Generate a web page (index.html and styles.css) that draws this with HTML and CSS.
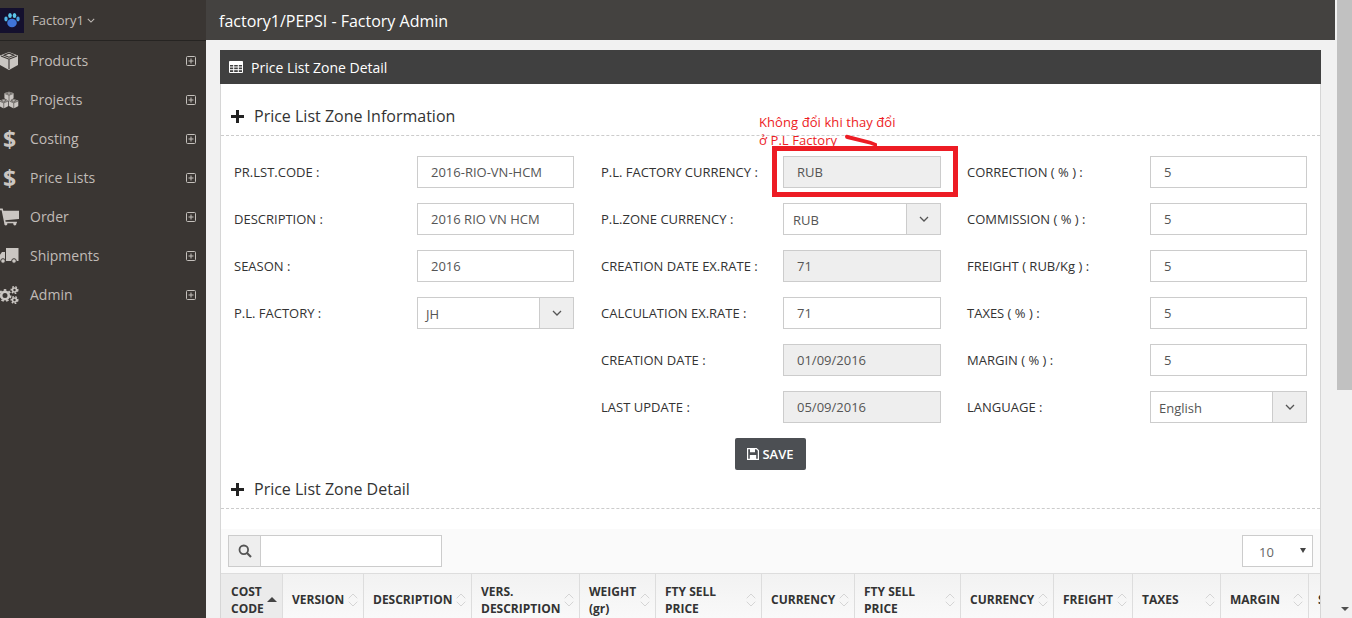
FILE: index.html
```html
<!DOCTYPE html>
<html lang="vi">
<head>
<meta charset="utf-8">
<title>Factory Admin</title>
<link rel="stylesheet" href="styles.css">
</head>
<body>
<svg class="defs" width="0" height="0" aria-hidden="true">
  <symbol id="cube" viewBox="0 0 18 18">
    <path d="M9 0l9 3.4V13l-9 5-9-5V3.4z" fill="#cac6c2"/>
    <path d="M1 4l8 3.2L17 4M9 7.2V17M4 3.2L9 1.2l5 2-5 2z" fill="none" stroke="#3a3633" stroke-width="1.1"/>
  </symbol>
  <symbol id="sort" viewBox="0 0 14 18">
    <path d="M2 7l5-5 5 5M2 11l5 5 5-5" fill="none" stroke="#cfcfcf" stroke-width="1"/>
  </symbol>
  <symbol id="plus-box" viewBox="0 0 10 10">
    <rect x=".5" y=".5" width="9" height="9" rx="1" fill="none" stroke="#c4c0bc"/>
    <path d="M2.5 5h5M5 2.5v5" stroke="#c4c0bc"/>
  </symbol>
  <symbol id="plus" viewBox="0 0 13 13">
    <path d="M5 0h3v5h5v3H8v5H5V8H0V5h5z" fill="#222"/>
  </symbol>
  <symbol id="chev" viewBox="0 0 10 6">
    <path d="M1 1l4 4 4-4" fill="none" stroke="currentColor" stroke-width="1.3"/>
  </symbol>
</svg>

<aside class="sidebar">
  <header class="brand">
    <svg class="logo" viewBox="0 0 24 25">
      <rect width="24" height="25" fill="#14102e"/>
      <ellipse cx="12" cy="15" rx="4.800" ry="4.200" fill="#3f74d8"/>
      <ellipse cx="6" cy="11" rx="1.700" ry="2.400" fill="#4fb6e6"/>
      <ellipse cx="10" cy="7.500" rx="1.800" ry="2.600" fill="#5cc6ea"/>
      <ellipse cx="14.500" cy="7.500" rx="1.800" ry="2.600" fill="#5cc6ea"/>
      <ellipse cx="18" cy="11" rx="1.700" ry="2.400" fill="#4a9fe2"/>
    </svg>
    <span class="brand-name">Factory1</span>
    <svg class="brand-chev"><use href="#chev"/></svg>
  </header>
  <nav class="menu">
    <a class="menu-item">
      <span class="menu-icon"><svg class="ic" viewBox="0 0 18 18"><use href="#cube"/></svg></span>
      <span class="menu-label">Products</span>
      <svg class="menu-plus"><use href="#plus-box"/></svg>
    </a>
    <a class="menu-item">
      <span class="menu-icon"><svg class="ic" viewBox="0 0 21 18"><use href="#cube" x="5.500" y="0" width="10" height="10"/><use href="#cube" x="0" y="8" width="10" height="10"/><use href="#cube" x="10.500" y="8" width="10" height="10"/></svg></span>
      <span class="menu-label">Projects</span>
      <svg class="menu-plus"><use href="#plus-box"/></svg>
    </a>
    <a class="menu-item">
      <span class="menu-icon"><span class="dollar">$</span></span>
      <span class="menu-label">Costing</span>
      <svg class="menu-plus"><use href="#plus-box"/></svg>
    </a>
    <a class="menu-item">
      <span class="menu-icon"><span class="dollar">$</span></span>
      <span class="menu-label">Price Lists</span>
      <svg class="menu-plus"><use href="#plus-box"/></svg>
    </a>
    <a class="menu-item">
      <span class="menu-icon"><svg class="ic" viewBox="0 0 19 16"><path d="M0 0h3.500l.6 2H19v8L6 11.200l.3 1.300H17V14H5L2.500 1.500H0z" fill="#cac6c2"/><circle cx="6.500" cy="14.500" r="1.500" fill="#cac6c2"/><circle cx="15" cy="14.500" r="1.500" fill="#cac6c2"/></svg></span>
      <span class="menu-label">Order</span>
      <svg class="menu-plus"><use href="#plus-box"/></svg>
    </a>
    <a class="menu-item">
      <span class="menu-icon"><svg class="ic" viewBox="0 0 20 16"><path d="M7 0h12.500v13H7zM0 8l3-4h3v9H0z" fill="#cac6c2"/><circle cx="4" cy="13" r="2.300" fill="#cac6c2" stroke="#3a3633"/><circle cx="15" cy="13" r="2.300" fill="#cac6c2" stroke="#3a3633"/></svg></span>
      <span class="menu-label">Shipments</span>
      <svg class="menu-plus"><use href="#plus-box"/></svg>
    </a>
    <a class="menu-item">
      <span class="menu-icon"><svg class="ic" viewBox="0 0 20 18"><circle cx="6" cy="9.500" r="3.800" fill="none" stroke="#cac6c2" stroke-width="2.600"/><circle cx="6" cy="9.500" r="5.600" fill="none" stroke="#cac6c2" stroke-width="1.800" stroke-dasharray="2.500 2.400"/><circle cx="15.500" cy="4" r="2" fill="none" stroke="#cac6c2" stroke-width="1.600"/><circle cx="15.500" cy="4" r="3.300" fill="none" stroke="#cac6c2" stroke-width="1.400" stroke-dasharray="1.700 1.500"/><circle cx="15.500" cy="14" r="2" fill="none" stroke="#cac6c2" stroke-width="1.600"/><circle cx="15.500" cy="14" r="3.300" fill="none" stroke="#cac6c2" stroke-width="1.400" stroke-dasharray="1.700 1.500"/></svg></span>
      <span class="menu-label">Admin</span>
      <svg class="menu-plus"><use href="#plus-box"/></svg>
    </a>
  </nav>
</aside>

<main class="main">
  <header class="topbar">factory1/PEPSI - Factory Admin</header>
  <section class="panel">
    <header class="panel-head">
      <svg class="panel-icon" viewBox="0 0 14 12"><path d="M.5.500h13v11H.5zM.5 3.500h13M.5 6h13M.5 8.700h13M4.700 3.500v8M9.300 3.500v8" fill="none" stroke="#fff" stroke-width="1"/><rect x=".5" y=".5" width="13" height="3" fill="#fff"/></svg>
      <span>Price List Zone Detail</span>
    </header>

    <h2 class="section-head first"><svg class="section-plus"><use href="#plus"/></svg>Price List Zone Information</h2>

    <form class="form">
      <div class="form-col">
        <div class="field"><label>PR.LST.CODE :</label><div class="input">2016-RIO-VN-HCM</div></div>
        <div class="field"><label>DESCRIPTION :</label><div class="input">2016 RIO VN HCM</div></div>
        <div class="field"><label>SEASON :</label><div class="input">2016</div></div>
        <div class="field"><label>P.L. FACTORY :</label><div class="select"><span>JH</span><i class="select-btn"><svg class="select-chev"><use href="#chev"/></svg></i></div></div>
      </div>
      <div class="form-col mid">
        <div class="field"><label>P.L. FACTORY CURRENCY :</label><div class="input off">RUB</div></div>
        <div class="field"><label>P.L.ZONE CURRENCY :</label><div class="select wide"><span>RUB</span><i class="select-btn"><svg class="select-chev"><use href="#chev"/></svg></i></div></div>
        <div class="field"><label>CREATION DATE EX.RATE :</label><div class="input off">71</div></div>
        <div class="field"><label>CALCULATION EX.RATE :</label><div class="input">71</div></div>
        <div class="field"><label>CREATION DATE :</label><div class="input off">01/09/2016</div></div>
        <div class="field"><label>LAST UPDATE :</label><div class="input off">05/09/2016</div></div>
      </div>
      <div class="form-col">
        <div class="field"><label>CORRECTION ( % ) :</label><div class="input">5</div></div>
        <div class="field"><label>COMMISSION ( % ) :</label><div class="input">5</div></div>
        <div class="field"><label>FREIGHT ( RUB/Kg ) :</label><div class="input">5</div></div>
        <div class="field"><label>TAXES ( % ) :</label><div class="input">5</div></div>
        <div class="field"><label>MARGIN ( % ) :</label><div class="input">5</div></div>
        <div class="field"><label>LANGUAGE :</label><div class="select lang"><span>English</span><i class="select-btn"><svg class="select-chev"><use href="#chev"/></svg></i></div></div>
      </div>
    </form>

    <div class="actions">
      <button class="save" type="button">
        <svg class="save-icon" viewBox="0 0 12 12"><path d="M.6.600h8.800l2 2v8.800H.6z" fill="none" stroke="#fff" stroke-width="1.200"/><path d="M3 1h5v3.200H3zM2.800 7h6.400v4H2.800z" fill="#fff"/></svg>SAVE
      </button>
    </div>

    <h2 class="section-head"><svg class="section-plus"><use href="#plus"/></svg>Price List Zone Detail</h2>

    <div class="toolbar">
      <div class="search">
        <span class="search-btn"><svg class="search-icon" viewBox="0 0 14 14"><circle cx="5.800" cy="5.800" r="4.300" fill="none" stroke="#555" stroke-width="1.800"/><path d="M9 9l4 4" stroke="#555" stroke-width="2.200"/></svg></span>
        <span class="search-input"></span>
      </div>
      <div class="page-size"><span>10</span><i class="page-caret"></i></div>
    </div>

    <div class="table-wrap">
      <table class="grid">
        <thead>
          <tr>
            <th class="sorted">COST CODE<i class="sort-up"></i></th>
            <th>VERSION<svg class="sort"><use href="#sort"/></svg></th>
            <th>DESCRIPTION<svg class="sort"><use href="#sort"/></svg></th>
            <th>VERS. DESCRIPTION<svg class="sort"><use href="#sort"/></svg></th>
            <th>WEIGHT (gr)<svg class="sort"><use href="#sort"/></svg></th>
            <th>FTY SELL PRICE<svg class="sort"><use href="#sort"/></svg></th>
            <th>CURRENCY<svg class="sort"><use href="#sort"/></svg></th>
            <th>FTY SELL PRICE<svg class="sort"><use href="#sort"/></svg></th>
            <th>CURRENCY<svg class="sort"><use href="#sort"/></svg></th>
            <th>FREIGHT<svg class="sort"><use href="#sort"/></svg></th>
            <th>TAXES<svg class="sort"><use href="#sort"/></svg></th>
            <th>MARGIN<svg class="sort"><use href="#sort"/></svg></th>
            <th>SELL</th>
          </tr>
        </thead>
      </table>
    </div>
  </section>

  <div class="note">
    <p class="note-text">Không đổi khi thay đổi<br>ở P.L Factory</p>
    <svg class="note-stroke" viewBox="0 0 34 14"><path d="M1 2.500Q1 .5 3 .8L27 7l6 2.500V13l-3-1-4-1.500L3 5Q1 4.500 1 2.500z" fill="#ed1c24"/></svg>
    <div class="note-box"></div>
  </div>
</main>

<div class="scrollbar">
  <div class="scroll-thumb"></div>
  <i class="scroll-arrow"></i>
</div>
</body>
</html>
```
FILE: styles.css
```css
* { box-sizing: border-box; }
html, body { height: 100%; }
body {
  margin: 0;
  display: flex;
  height: 100vh;
  overflow: hidden;
  background: #f1f1f1;
  font-family: "Open Sans", "Noto Sans", sans-serif;
  font-size: 13px;
  color: #333;
}
.defs { position: absolute; }

/* sidebar */
.sidebar {
  flex: 0 0 206px;
  background: #3a3633;
  color: #c0bbb7;
}
.brand {
  height: 41px;
  padding-top: 8px;
  display: flex;
  align-items: flex-start;
  border-bottom: 1px solid #262422;
}
.logo { width: 24px; height: 25px; flex: none; }
.brand-name { margin-left: 8px; font-size: 13px; line-height: 24px; }
.brand-chev { width: 8px; height: 5px; margin: 10px 0 0 3px; color: #c0bbb7; }
.menu { display: flex; flex-direction: column; }
.menu-item {
  height: 39px;
  display: flex;
  align-items: center;
  font-size: 14px;
}
.menu-icon {
  flex: 0 0 30px;
  display: flex;
  justify-content: center;
  margin-left: -1px;
  margin-right: 1px;
}
.ic { width: 20px; height: 18px; margin-right: 10px; margin-left: -1px; flex: none; }
.dollar {
  font-size: 23px;
  font-weight: 700;
  line-height: 24px;
  color: #cac6c2;
  margin-right: 10px;
  margin-left: 1px;
}
.menu-label { flex: 1; }
.menu-plus { width: 10px; height: 10px; margin-right: 10px; }

/* main column */
.main {
  flex: 0 0 1131px;
  min-width: 0;
  position: relative;
}
.topbar {
  width: 1129px;
  height: 40px;
  padding-left: 13px;
  background: #444240;
  color: #fff;
  font-size: 16px;
  line-height: 42px;
}
.panel {
  margin: 10px 16px 0 14px;
  background: #fff;
  border-left: 1px solid #d6d6d6;
  border-right: 1px solid #d6d6d6;
}
.panel-head {
  height: 34px;
  margin: 0 -1px;
  padding-left: 9px;
  display: flex;
  align-items: center;
  background: #404040;
  color: #fff;
  font-size: 14px;
}
.panel-icon { width: 14px; height: 12px; margin-right: 8px; }
.section-head {
  margin: 0 0 20px;
  padding: 8px 0 8px 10px;
  display: flex;
  align-items: center;
  font-size: 16px;
  line-height: 22px;
  font-weight: 400;
  color: #333;
  border-bottom: 1px dashed #ccc;
}
.section-head.first { margin-top: 13px; }
.section-plus { width: 13px; height: 13px; margin-right: 10px; flex: none; }

/* form */
.form {
  display: flex;
  padding-left: 13px;
}
.form-col {
  flex: 0 0 340px;
  display: flex;
  flex-direction: column;
  gap: 15px;
}
.form-col.mid { margin: 0 26px 0 27px; }
.field {
  height: 32px;
  display: flex;
  align-items: center;
  justify-content: space-between;
}
.field label { color: #333; white-space: nowrap; }
.input, .select {
  width: 157px;
  height: 32px;
  border: 1px solid #ccc;
  background: #fff;
  color: #555;
  line-height: 30px;
  padding-left: 13px;
}
.mid .input { width: 158px; }
.input.off { background: #eee; }
.select {
  display: flex;
  padding-left: 8px;
  line-height: 33px;
}
.select span { flex: 1; }
.select.wide { width: 158px; padding-left: 9px; }
.select.lang { padding-left: 8px; }
.select-btn {
  flex: 0 0 34px;
  display: flex;
  align-items: center;
  justify-content: center;
  background: #eee;
  border-left: 1px solid #ccc;
}
.select-chev { width: 10px; height: 6px; color: #555; }

.actions {
  margin-top: 15px;
  display: flex;
  padding-left: 514px;
}
.save {
  width: 71px;
  height: 32px;
  padding: 0;
  display: flex;
  align-items: center;
  justify-content: center;
  gap: 3px;
  border: 0;
  border-radius: 2px;
  background: #4c4f53;
  color: #fff;
  font: 600 13px "Open Sans", sans-serif;
}
.save-icon { width: 12px; height: 12px; }

/* toolbar */
.toolbar {
  height: 45px;
  padding: 6px 7px;
  display: flex;
  justify-content: space-between;
  background: #fafafa;
  border-bottom: 1px solid #ddd;
}
.search { display: flex; width: 214px; height: 32px; border: 1px solid #ccc; }
.search-btn {
  flex: 0 0 32px;
  display: flex;
  align-items: center;
  justify-content: center;
  background: #eee;
  border-right: 1px solid #ccc;
}
.search-icon { width: 14px; height: 14px; }
.search-input { flex: 1; background: #fff; }
.page-size {
  width: 71px;
  height: 32px;
  border: 1px solid #ccc;
  background: #fff;
  position: relative;
  padding-left: 16px;
  font-size: 13px;
  line-height: 33px;
  color: #666;
}
.page-caret {
  position: absolute;
  right: 6px;
  top: 12px;
  border: 3px solid transparent;
  border-top: 5px solid #444;
  border-bottom: 0;
}

/* table */
.table-wrap { overflow: hidden; }
.grid {
  width: 1160px;
  table-layout: fixed;
  border-collapse: separate;
  border-spacing: 0;
}
.grid th {
  position: relative;
  height: 50px;
  padding: 1px 22px 0 9px;
  text-align: left;
  font-size: 12px;
  font-weight: 700;
  line-height: 17px;
  color: #333;
  background: linear-gradient(#f2f2f2, #fafafa);
  border-right: 1px solid #ddd;
}
.grid th:nth-child(1) { width: 62px; padding-right: 12px; padding-left: 10px; }
.grid th:nth-child(2) { width: 81px; padding-right: 4px; }
.grid th:nth-child(3) { width: 108px; padding-right: 4px; }
.grid th:nth-child(4) { width: 108px; padding-right: 4px; }
.grid th:nth-child(5) { width: 76px; }
.grid th:nth-child(6) { width: 106px; }
.grid th:nth-child(7) { width: 93px; padding-right: 4px; }
.grid th:nth-child(8) { width: 106px; }
.grid th:nth-child(9) { width: 93px; padding-right: 4px; }
.grid th:nth-child(10) { width: 79px; padding-right: 4px; }
.grid th:nth-child(11) { width: 88px; }
.grid th:nth-child(12) { width: 88px; }
.grid th.sorted { background: #ebebeb; }
.sort {
  position: absolute;
  right: 4px;
  top: 18px;
  width: 12px;
  height: 16px;
}
.sort-up {
  position: absolute;
  right: 5px;
  top: 23px;
  border: 5px solid transparent;
  border-bottom: 5px solid #444;
  border-top: 0;
}

/* annotation */
.note { position: absolute; inset: 0; pointer-events: none; }
.note-text {
  position: absolute;
  left: 553px;
  top: 113px;
  margin: 0;
  color: #ed1c24;
  font-size: 13px;
  line-height: 18px;
  letter-spacing: .08px;
}
.note-stroke {
  position: absolute;
  left: 638px;
  top: 134px;
  width: 34px;
  height: 14px;
}
.note-box {
  position: absolute;
  left: 566px;
  top: 146px;
  width: 186px;
  height: 51px;
  border: 5px solid #ed1c24;
}

/* scrollbar */
.scrollbar {
  flex: 0 0 15px;
  display: flex;
  flex-direction: column;
  align-items: center;
  background: #f1f1f1;
}
.scroll-thumb { width: 100%; height: 390px; background: #c1c1c1; }
.scroll-arrow {
  margin-top: auto;
  margin-bottom: 7px;
  border: 4px solid transparent;
  border-top: 4px solid #505050;
  border-bottom: 0;
}
```
